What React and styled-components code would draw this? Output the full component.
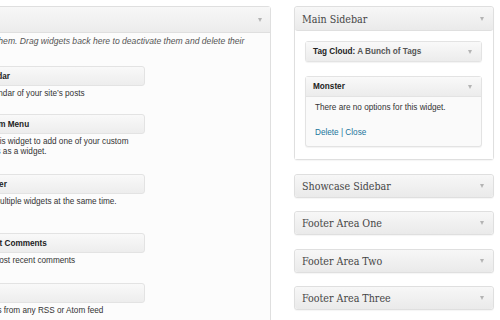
import styled, { createGlobalStyle } from "styled-components";

const GlobalStyle = createGlobalStyle`
  html, body {
    margin: 0;
    padding: 0;
    background: #fff;
    overflow: hidden;
  }
  body {
    width: 500px;
    height: 320px;
    font-family: "Liberation Sans", Arial, sans-serif;
    color: #333;
  }
`;

const Page = styled.div`
  display: flex;
  align-items: flex-start;
  padding-top: 6px;
  width: 500px;
  height: 314px;
  overflow: hidden;
`;

/* the available-widgets panel is cropped by the screenshot's left edge */
const LeftPanel = styled.div`
  flex: none;
  margin-left: -260px;
  width: 529px;
  height: 330px;
  border: 1px solid #dfdfdf;
  border-radius: 3px;
  background: #fcfcfc;
`;

const PanelHeader = styled.div`
  display: flex;
  align-items: center;
  justify-content: space-between;
  height: 25px;
  padding: 0 8px 0 10px;
  border-bottom: 1px solid #dfdfdf;
  background: linear-gradient(#f7f7f7, #ececec);
  font-family: "DejaVu Serif", Georgia, serif;
  font-stretch: condensed;
  font-size: 10.6px;
  color: #464646;
`;

const Arrow = styled.span`
  width: 0;
  height: 0;
  border-left: 2.5px solid transparent;
  border-right: 2.5px solid transparent;
  border-top: 4px solid #b4b4b4;
`;

const Intro = styled.div`
  padding: 2px 0 0 29px;
  height: 31px;
  font-size: 8.6px;
  line-height: 12px;
  font-style: italic;
  color: #555;
  white-space: nowrap;
`;

const WidgetList = styled.div`
  display: flex;
  flex-direction: column;
  padding-left: 228px;
`;

const WidgetRow = styled.div`
  height: ${(p) => p.$h}px;
`;

const WidgetBar = styled.div`
  display: flex;
  align-items: center;
  padding: 0 5px;
  box-sizing: border-box;
  width: 176px;
  height: 20px;
  border: 1px solid #e3e3e3;
  border-radius: 3px;
  background: linear-gradient(#f9f9f9, #ededed);
  font-size: 8.2px;
  font-weight: bold;
  color: #222;
`;

const WidgetDesc = styled.div`
  padding: 3px 7px 0;
  width: 170px;
  font-size: 8.2px;
  line-height: 10px;
  color: #333;
`;

const RightCol = styled.div`
  flex: none;
  margin-left: 23px;
  width: 200px;
  display: flex;
  flex-direction: column;
  gap: 13.6px;
`;

const SidebarBox = styled.div`
  border: 1px solid #dfdfdf;
  border-radius: 3px;
  background: #fcfcfc;
  box-shadow: 0 1px 1px rgba(0, 0, 0, 0.04);
`;

const SidebarHeader = styled.div`
  display: flex;
  align-items: center;
  justify-content: space-between;
  height: ${(p) => (p.$open ? 23 : 22)}px;
  padding: 0 9px 0 7px;
  border-bottom: ${(p) => (p.$open ? "1px solid #dfdfdf" : "none")};
  border-radius: 3px;
  background: linear-gradient(#f7f7f7, #eaeaea);
  font-family: "DejaVu Serif", Georgia, serif;
  font-stretch: condensed;
  font-size: 10.6px;
  color: #464646;
`;

const SidebarBody = styled.div`
  display: flex;
  flex-direction: column;
  gap: 14px;
  padding: 10px 11px 12px 10px;
  background: #fff;
`;

const InnerWidget = styled.div`
  border: 1px solid #e3e3e3;
  border-radius: 3px;
  background: #fafafa;
  box-shadow: 0 1px 1px rgba(0, 0, 0, 0.05);
`;

const InnerHeader = styled.div`
  display: flex;
  align-items: center;
  justify-content: space-between;
  height: 19px;
  padding: 0 9px 0 7px;
  border-bottom: ${(p) => (p.$open ? "1px solid #e3e3e3" : "none")};
  background: linear-gradient(#f9f9f9, #ececec);
  font-size: 8.2px;
  font-weight: bold;
  color: #222;
`;

const Light = styled.span`
  font-weight: bold;
  color: #555;
`;

const InnerBody = styled.div`
  padding: 6px 9px 8px;
  height: 35px;
  font-size: 8.2px;
  color: #333;
`;

const NoOptions = styled.div`
  line-height: 10px;
`;

const Links = styled.div`
  margin-top: 15px;
  line-height: 10px;
  color: #21759b;
`;

const available = [
  { name: "Calendar", desc: ["A calendar of your site\u2019s posts"], h: 48 },
  {
    name: "Custom Menu",
    desc: ["Use this widget to add one of your custom", "menus as a widget."],
    h: 60,
  },
  { name: "Monster", desc: ["Test multiple widgets at the same time."], h: 59 },
  { name: "Recent Comments", desc: ["The most recent comments"], h: 50 },
  { name: "RSS", desc: ["Entries from any RSS or Atom feed"], h: 40 },
];

const sidebars = [
  "Showcase Sidebar",
  "Footer Area One",
  "Footer Area Two",
  "Footer Area Three",
];

export default function App() {
  return (
    <>
      <GlobalStyle />
      <Page>
        <LeftPanel>
          <PanelHeader>
            <span>Available Widgets</span>
            <Arrow />
          </PanelHeader>
          <Intro>
            <div>
              Drag widgets from here to a sidebar on the right to activate
              them. Drag widgets back here to deactivate them and delete their
            </div>
            <div>settings.</div>
          </Intro>
          <WidgetList>
            {available.map((w) => (
              <WidgetRow key={w.name} $h={w.h}>
                <WidgetBar>{w.name}</WidgetBar>
                <WidgetDesc>
                  {w.desc.map((l) => (
                    <div key={l}>{l}</div>
                  ))}
                </WidgetDesc>
              </WidgetRow>
            ))}
          </WidgetList>
        </LeftPanel>

        <RightCol>
          <SidebarBox>
            <SidebarHeader $open>
              <span>Main Sidebar</span>
              <Arrow />
            </SidebarHeader>
            <SidebarBody>
              <InnerWidget>
                <InnerHeader>
                  <span>
                    Tag Cloud: <Light>A Bunch of Tags</Light>
                  </span>
                  <Arrow />
                </InnerHeader>
              </InnerWidget>
              <InnerWidget>
                <InnerHeader $open>
                  <span>Monster</span>
                  <Arrow />
                </InnerHeader>
                <InnerBody>
                  <NoOptions>There are no options for this widget.</NoOptions>
                  <Links>Delete | Close</Links>
                </InnerBody>
              </InnerWidget>
            </SidebarBody>
          </SidebarBox>
          {sidebars.map((s) => (
            <SidebarBox key={s}>
              <SidebarHeader>
                <span>{s}</span>
                <Arrow />
              </SidebarHeader>
            </SidebarBox>
          ))}
        </RightCol>
      </Page>
    </>
  );
}
